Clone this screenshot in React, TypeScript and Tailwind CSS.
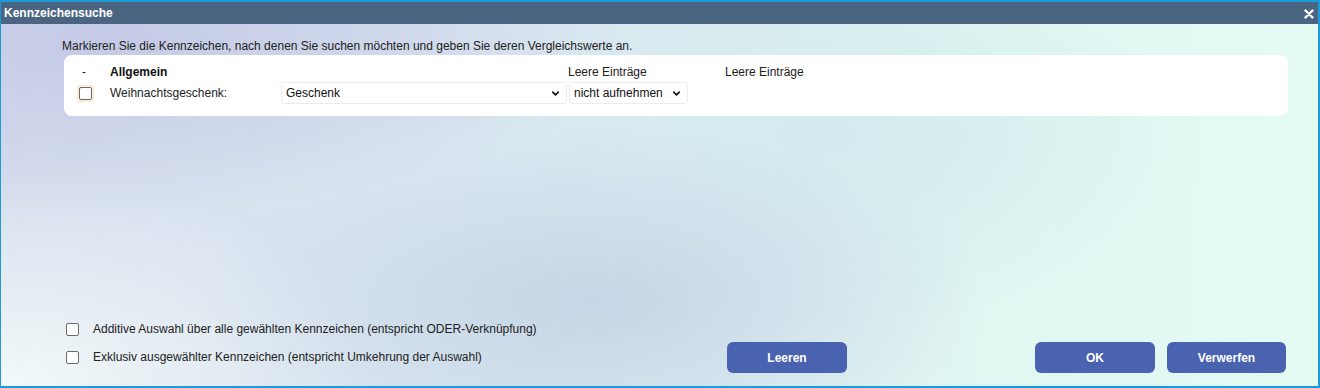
import { ChevronDown } from "lucide-react";

const font = { fontFamily: '"Liberation Sans", Arial, sans-serif' };

function Check({ focused = false }: { focused?: boolean }) {
  return (
    <input
      type="checkbox"
      className={
        "appearance-none w-[13px] h-[13px] border border-[#6b6b6b] rounded-[2px] bg-white m-0 shrink-0 " +
        (focused ? "shadow-[0_0_0_2px_#fdebd3]" : "")
      }
    />
  );
}

function Select({ value, width }: { value: string; width: string }) {
  return (
    <div
      className={
        "h-[22px] flex items-center justify-between bg-white border border-[#ececec] rounded-[3px] pl-[4px] pr-[5px] text-[12px] text-[#111] " +
        width
      }
    >
      <span>{value}</span>
      <ChevronDown size={11} strokeWidth={3.5} className="text-[#111]" />
    </div>
  );
}

function Button({ label, width = "w-[120px]" }: { label: string; width?: string }) {
  return (
    <button
      className={
        "h-[31px] rounded-[6px] bg-[#4a63b1] text-white text-[12px] font-bold " + width
      }
    >
      {label}
    </button>
  );
}

export default function App() {
  return (
    <div
      style={font}
      className="w-[1320px] h-[388px] flex flex-col border-l border-r-2 border-t-2 border-b-2 border-[#1d9ad8] bg-[radial-gradient(ellipse_30%_45%_at_45%_78%,#c6d6e6_0%,transparent_100%),radial-gradient(ellipse_40%_45%_at_8%_10%,#c4cae6_0%,transparent_100%),radial-gradient(ellipse_30%_55%_at_0%_100%,#f2f9f8_0%,transparent_100%),radial-gradient(ellipse_30%_50%_at_62%_35%,#d2eaee_0%,transparent_100%),linear-gradient(90deg,#d6deee_0%,#dce9f1_45%,#e0f7f2_75%,#e4fbf4_100%)]"
    >
      {/* Title bar */}
      <div className="h-[22px] shrink-0 bg-[#4a6582] flex items-center justify-between pl-[3px] pr-[4px]">
        <span className="text-white text-[12px] font-bold">Kennzeichensuche</span>
        <svg width="10" height="10" viewBox="0 0 10 10" className="mt-[2px]">
          <path d="M1.5 1.5 L8.5 8.5 M8.5 1.5 L1.5 8.5" stroke="white" strokeWidth="2.4" strokeLinecap="round" />
        </svg>
      </div>

      {/* Content */}
      <div className="flex-1 flex flex-col">
        <p className="mt-[15px] ml-[61px] text-[12px] leading-[14px] text-[#222]">
          Markieren Sie die Kennzeichen, nach denen Sie suchen möchten und geben Sie deren Vergleichswerte an.
        </p>

        <div className="mt-[2px] ml-[63px] mr-[30px] h-[61px] bg-white rounded-[8px] pt-[10px] text-[12px] text-[#222]">
          <div className="grid grid-cols-[46px_171px_287px_157px_auto] h-[14px] leading-[14px]">
            <span className="pl-[18px]">-</span>
            <span className="font-bold text-[#111]">Allgemein</span>
            <span />
            <span>Leere Einträge</span>
            <span>Leere Einträge</span>
          </div>
          <div className="grid grid-cols-[46px_171px_288px_157px_auto] h-[22px] mt-[3px] items-center">
            <span className="pl-[15px] flex items-center">
              <Check focused />
            </span>
            <span>Weihnachtsgeschenk:</span>
            <Select value="Geschenk" width="w-[286px]" />
            <Select value="nicht aufnehmen" width="w-[119px]" />
            <span />
          </div>
        </div>

        <div className="flex-1" />

        {/* Bottom */}
        <div className="flex items-end pl-[65px] pr-[32px] pb-[13px] text-[12px] text-[#222]">
          <div className="w-[661px] flex flex-col gap-[8px] pb-[6px]">
            <label className="h-[20px] flex items-center gap-[14px]">
              <Check />
              <span>Additive Auswahl über alle gewählten Kennzeichen (entspricht ODER-Verknüpfung)</span>
            </label>
            <label className="h-[20px] flex items-center gap-[14px]">
              <Check />
              <span>Exklusiv ausgewählter Kennzeichen (entspricht Umkehrung der Auswahl)</span>
            </label>
          </div>
          <Button label="Leeren" />
          <div className="ml-auto flex gap-[12px]">
            <Button label="OK" />
            <Button label="Verwerfen" width="w-[119px]" />
          </div>
        </div>
      </div>
    </div>
  );
}
